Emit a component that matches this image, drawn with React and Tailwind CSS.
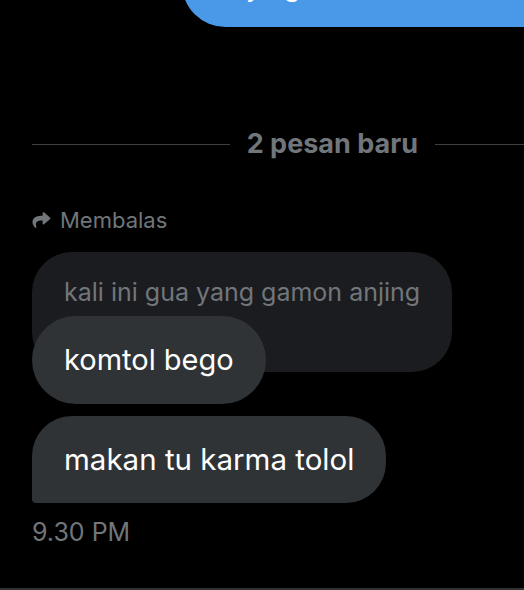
import { FaShare } from 'react-icons/fa';

const font = { fontFamily: 'Inter, "Noto Sans", sans-serif' };

export default function App() {
  return (
    <div className="w-[524px] h-[590px] bg-black overflow-hidden flex flex-col" style={font}>
      {/* outgoing bubble cut off at the top */}
      <div className="flex justify-end">
        <div className="-mt-[60px] w-[342px] h-[87px] bg-[#4a99e9] rounded-l-[48px] text-white text-[27px] pl-[64px] pt-[31px] leading-[32px]">
          ya gw
        </div>
      </div>

      {/* new messages divider */}
      <div className="flex items-center mt-[101px] pl-8">
        <div className="flex-1 h-px bg-[#3e4144]" />
        <span className="px-[17px] text-[27px] font-bold text-[#71767b] leading-8">2 pesan baru</span>
        <div className="w-[89px] h-px bg-[#3e4144]" />
      </div>

      <div className="flex flex-col px-8 mt-[48px]">
        {/* reply label */}
        <div className="flex items-center gap-[9px] text-[#71767b] text-[22px] leading-6">
          <FaShare className="w-[19px] h-[18px]" />
          <span>Membalas</span>
        </div>

        {/* quoted message */}
        <div className="mt-[20px] self-start h-[120px] -mb-[56px] bg-[#1b1c1f] rounded-[40px] px-8 pt-[24px] text-[25px] leading-8 text-[#71767b]">
          kali ini gua yang gamon anjing
        </div>

        <div className="relative self-start h-[88px] flex items-center bg-[#2f3336] rounded-[44px] px-8 text-[29px] text-white">
          komtol bego
        </div>

        <div className="mt-3 self-start h-[87px] flex items-center bg-[#2f3336] rounded-[40px] rounded-bl-[4px] px-8 text-[29.5px] text-white">
          makan tu karma tolol
        </div>

        <div className="mt-[15px] text-[25px] leading-7 text-[#71767b]">9.30 PM</div>
      </div>

      <div className="mt-auto h-[2px] bg-[#2f3336]" />
    </div>
  );
}
